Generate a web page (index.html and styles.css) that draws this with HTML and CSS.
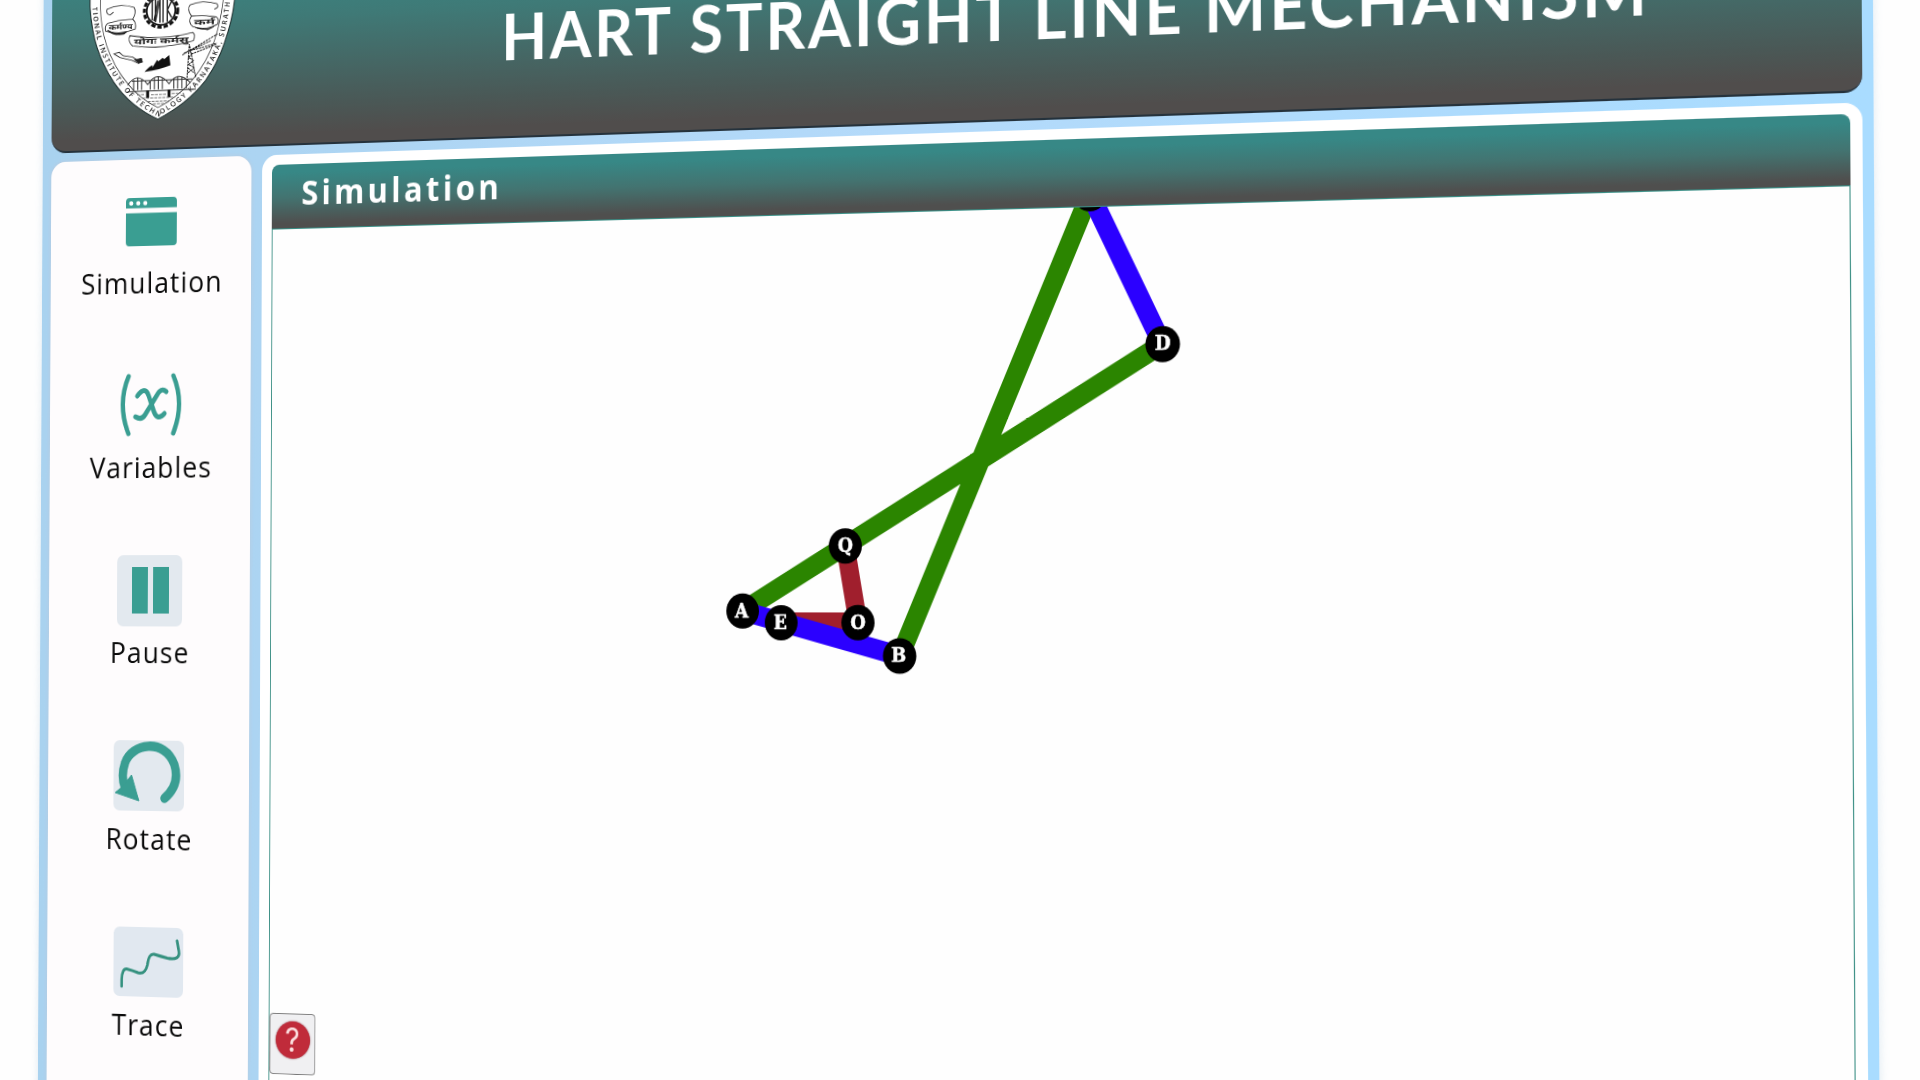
FILE: index.html
```html
<!DOCTYPE html>
<html lang="en">
<head>
<meta charset="utf-8">
<title>Hart Straight Line Mechanism</title>
<link rel="stylesheet" href="styles.css">
</head>
<body>
<div class="scene">
  <div class="app">
    <header class="banner">
      <svg class="emblem" viewBox="50 -80 450 440" preserveAspectRatio="none">
        <path d="M57-80V0Q62 75 80 130Q98 185 130 235Q180 312 263 353Q352 308 405 240Q440 190 460 130Q484 60 490 0V-80Z" fill="#fff" stroke="#1c2b2b" stroke-width="3"/>
        <path d="M88-80V0Q90 65 108 122Q130 185 165 232Q205 288 263 318Q325 288 370 232Q410 180 430 122Q448 70 456 0V-80Z" fill="none" stroke="#222" stroke-width="2"/>
        <path id="ring" d="M64-60V0Q68 72 88 130Q104 180 138 230Q188 305 263 344Q345 302 397 235Q432 186 452 128Q476 60 481-60" fill="none"/>
        <text class="ring-text"><textPath href="#ring" startOffset="62" textLength="835" lengthAdjust="spacing">TIONAL INSTITUTE OF TECHNOLOGY KARNATAKA, SURATH</textPath></text>
        <circle cx="271" cy="22" r="50" fill="#fff" stroke="#111" stroke-width="9" stroke-dasharray="13 6"/>
        <circle cx="271" cy="22" r="43" fill="#fff" stroke="#111" stroke-width="5"/>
        <path d="M245-15V50M254-15V56L268-15V58M277-15V58M290-15V56M290 20L303-8M290 20L303 44M262-10L250 52" fill="none" stroke="#222" stroke-width="4"/>
        <g fill="#fff" stroke="#222" stroke-width="2.5">
          <path d="M108 10Q150-8 190 8Q198 22 186 44Q198 56 194 74Q150 92 105 78Q100 62 110 54Q148 42 186 44M108 10Q104 24 118 28L128 20"/>
          <path d="M438 8Q395-8 358 8Q348 20 362 42Q350 60 366 74Q400 90 440 70Q446 56 436 48Q400 40 362 42M438 8Q446 20 430 24"/>
          <path d="M178 94Q270 114 366 92Q376 98 368 118Q270 142 186 126Q170 110 178 94Z"/>
          <path d="M110 74Q140 94 168 82L160 88Q130 94 110 74ZM374 78Q400 90 428 78L410 86Z" fill="#222"/>
        </g>
        <g class="motto"><text x="114" y="74" textLength="72" lengthAdjust="spacingAndGlyphs">कर्मण्य</text><text x="370" y="70" textLength="62" lengthAdjust="spacingAndGlyphs">कर्म</text><text x="190" y="122" textLength="164" lengthAdjust="spacingAndGlyphs">योगः कर्मसु</text></g>
        <path d="M222 207Q250 178 246 194L260 172L264 176L276 166L282 170L296 158L300 190Q270 202 222 207Z" fill="#111"/>
        <path d="M130 148L146 144L158 155L186 160L200 170L212 166L216 176L204 180L184 170L148 160Z" fill="#fff" stroke="#222" stroke-width="2.5"/>
        <path d="M190 168L214 164L216 176L204 180Z" fill="#222"/>
        <path d="M350 230L356 128L376 230M352 215L372 200L354 190L368 178L354 168L364 158L355 146M352 200L370 215M335 160L440 100M350 150L438 128M340 155L420 120M362 158L436 132" fill="none" stroke="#222" stroke-width="3" stroke-dasharray="7 2"/>
        <path d="M172 246Q200 202 232 246Q262 200 296 246Q324 204 360 246M172 266H376M184 234H366M190 230V262M202 224V262M214 230V262M240 236V262M252 226V262M264 224V262M276 226V262M310 232V262M322 224V262M334 226V262M348 236V262" fill="none" stroke="#333" stroke-width="3"/>
        <path d="M232 264V288M296 264V288" stroke="#111" stroke-width="9"/>
        <path d="M200 276H222M242 278H288M304 276H330M216 288H314M232 298H300M248 306H282" stroke="#777" stroke-width="3" stroke-dasharray="9 3"/>
      </svg>
      <h1 class="title">HART STRAIGHT LINE MECHANISM</h1>
    </header>
    <div class="body">
      <nav class="sidebar">
        <div class="item">
          <svg class="icon" viewBox="0 0 80 74">
            <path d="M11 23.5V17Q11 13 15 13H65Q69 13 69 17V23.5ZM11 28.5H69V58Q69 62 65 62H15Q11 62 11 58Z" fill="#3a9e92"/>
            <path d="M17 18.5H17.1M25 18.5H25.1M33 18.5H33.1" stroke="#fff" stroke-width="4.6" stroke-linecap="round"/>
          </svg>
          <span class="label">Simulation</span>
        </div>
        <div class="item">
          <svg class="icon" viewBox="0 0 80 74" fill="none" stroke="#3a9e92" stroke-width="5" stroke-linecap="round">
            <path d="M15 7Q2 35 15 65M66 7Q79 35 66 65"/>
            <path stroke-width="5" d="M25 27Q34 16 38 27L44 43Q48 53 56 45M58 23Q52 18 47 27L34 46Q30 52 23 48"/>
          </svg>
          <span class="label">Variables</span>
        </div>
        <div class="item">
          <svg class="icon" viewBox="0 0 80 74">
            <rect x="3" y="1" width="74" height="72" rx="7" fill="#e3e9ef"/>
            <path d="M20 13H38V60H20ZM44 13H62V60H44Z" fill="#3a9e92"/>
          </svg>
          <span class="label">Pause</span>
        </div>
        <div class="item">
          <svg class="icon" viewBox="0 0 80 74">
            <rect width="80" height="71" rx="7" fill="#e3e9ef"/>
            <path d="M13 48Q8 36 13 23C20 3 58-3 69 24Q76 44 58 58" fill="none" stroke="#3a9e92" stroke-width="9.5" stroke-linecap="round"/>
            <path d="M20.5 35L29 61L2 53L10 47Z" fill="#3a9e92" stroke="#3a9e92" stroke-linejoin="round"/>
          </svg>
          <span class="label">Rotate</span>
        </div>
        <div class="item">
          <svg class="icon" viewBox="0 0 80 74">
            <rect x="1" width="79" height="70" y="1" rx="7" fill="#e1e8f0"/>
            <path d="M10.4 61V54Q11 43 16 43.5Q23 45 29 47Q37 49 39.5 39Q41 27 47 28Q55 30 62 31.5Q77 34 75 24L73 14" fill="none" stroke="#35917f" stroke-width="3" stroke-linecap="round"/>
          </svg>
          <span class="label">Trace</span>
        </div>
      </nav>
      <main class="panel">
        <h2 class="panel-title">Simulation</h2>
        <div class="stage">
          <svg class="linkage" viewBox="0 0 1577 1000" width="1577" height="1000">
            <g fill="none" stroke-width="19">
              <path d="M614 319L627 392.5H548" stroke="#a01f2d"/>
              <path d="M508 381.7L932 130.7M861-13L670 424.5" stroke="#2b8500"/>
              <path d="M508 381.7L670 424.5M861-13L932 130.7" stroke="#2b00ff"/>
            </g>
            <g fill="#000">
              <circle cx="508" cy="381.7" r="17"/><circle cx="548" cy="393" r="17"/><circle cx="627" cy="392.7" r="17"/>
              <circle cx="669.5" cy="424.5" r="17"/><circle cx="614" cy="319.3" r="17"/><circle cx="932.5" cy="130.7" r="17"/><circle cx="861" cy="-13" r="17"/>
            </g>
            <g class="node-names">
              <text x="507" y="388">A</text><text x="547" y="399">E</text><text x="627" y="399">O</text>
              <text x="668.5" y="430.5">B</text><text x="614" y="325.5">Q</text><text x="932.5" y="136.5">D</text>
            </g>
          </svg>
          <button class="help" aria-label="Help"><span class="help-mark">?</span></button>
        </div>
      </main>
    </div>
  </div>
</div>
</body>
</html>
```
FILE: styles.css
```css
* { box-sizing: border-box; }

html { overflow: hidden; }

body {
  margin: 0;
  width: 1920px;
  height: 1080px;
  overflow: hidden;
  background: #fefefe;
  font-family: "Open Sans", "Noto Sans", sans-serif;
}

/* The whole application is a flat page tilted in perspective. */
.scene {
  display: flex;
  width: 1920px;
  height: 1200px;
  padding-left: 11px;
  transform-origin: 272px 165px;
  transform: matrix3d(0.89387, -0.028908, 0, -0.000067298, -0.003913, 0.99441, 0, -0.000006113, 0, 0, 1, 0, 0, 0, 0, 1);
}

.app {
  display: flex;
  flex-direction: column;
  gap: 9px;
  width: 1860px;
  height: 1240px;
  margin-top: -66px;
  padding: 10px 10.5px 10px 10px;
  background: linear-gradient(90deg, #a9d2ef, #b4dafa 50%, #a9dcff);
  box-shadow: 0 0 9px #dfeaf2;
}

.banner {
  display: flex;
  flex: none;
  height: 202px;
  padding: 27px 0 0 41px;
  border-radius: 16px;
  border-bottom: 2px solid #25323c;
  background: linear-gradient(#378a87, #3f7a77 35%, #4a5856 80%, #504d4c 95%);
}

.emblem { flex: none; width: 171px; height: 146px; }
.ring-text { font: 600 21px "Open Sans", sans-serif; fill: #222; }
.motto { font: bold 24px "Noto Sans", sans-serif; fill: #222; }

.title {
  margin: 30px 0 0 291px;
  color: #fff;
  font: 700 64px/88px Lato, sans-serif;
  letter-spacing: 3px;
  white-space: nowrap;
}

.body { display: flex; flex: 1; gap: 12px; min-height: 0; }

.sidebar {
  display: flex;
  flex: none;
  flex-direction: column;
  align-items: center;
  width: 228px;
  padding: 26px 0 0 2px;
  border-radius: 16px;
  background: #fefcfd;
  box-shadow: 0 0 4px #bcc9dc;
}

.item {
  display: flex;
  flex: none;
  flex-direction: column;
  align-items: center;
  height: 187.2px;
}

.icon { width: 80px; height: 74px; }

.label {
  margin: 5px 0 0 1px;
  color: #0a0a0a;
  font-size: 30px;
  line-height: 40px;
  letter-spacing: 1.2px;
  white-space: nowrap;
}

.panel {
  display: flex;
  flex: 1;
  flex-direction: column;
  min-width: 0;
  padding: 10px 11px 0;
  border-radius: 16px;
  background: #fff;
}

.panel-title {
  flex: none;
  height: 65px;
  margin: 0;
  padding-left: 33px;
  border-radius: 8px 8px 0 0;
  border-bottom: 1px solid #3a8f86;
  background: linear-gradient(#378886 12%, #437370 52%, #4f4f4e 92%);
  color: #fff;
  font: 700 34px/57px "Open Sans", sans-serif;
  letter-spacing: 3.6px;
}

.stage {
  position: relative;
  flex: 1;
  border: solid #3f9187;
  border-width: 0 1.5px;
  background: #fefefe;
  overflow: hidden;
}

.linkage { display: block; }
.node-names {
  font: bold 18px "DejaVu Serif", serif;
  fill: #fff;
  stroke: #fff;
  stroke-width: 0.5px;
  text-anchor: middle;
}

/* Floats over the lower left corner of the drawing area. */
.help {
  position: absolute;
  top: 783px;
  left: 0;
  display: flex;
  justify-content: center;
  width: 51px;
  height: 61px;
  padding: 7px 0 0;
  border: 1.5px solid #777;
  border-radius: 4px;
  background: #f0f0f2;
}

.help-mark {
  width: 38px;
  height: 37px;
  border-radius: 50%;
  background: #c02b3a;
  box-shadow: 0 0 2px #8b3540;
  color: #fbdede;
  font: 400 32px/38px Inter, sans-serif;
  text-align: center;
}
```
